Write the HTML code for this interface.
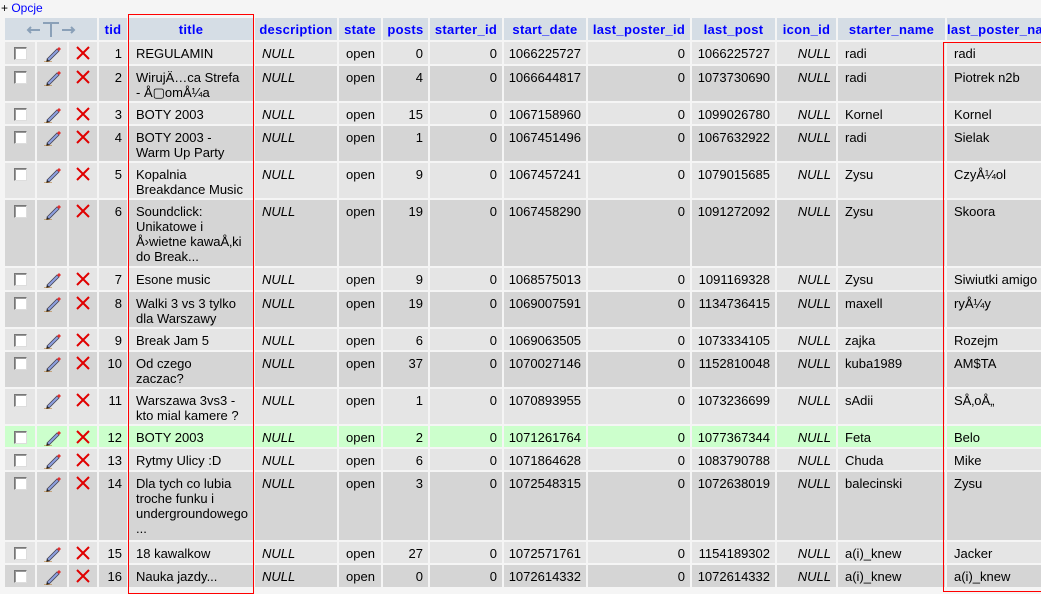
<!DOCTYPE html>
<html><head><meta charset="utf-8"><style>
body{margin:0;background:#f5f5f5;font-family:"Liberation Sans",sans-serif;font-size:13px;color:#000;width:1041px;height:587px;overflow:hidden;position:relative}
.op{position:absolute;left:1px;top:1px;font-size:12px;line-height:14px}
.op a{color:#0000ff;text-decoration:none}
.c{position:absolute;overflow:hidden;white-space:nowrap;line-height:15px;padding-top:4px;box-sizing:border-box}
.h{background:#d5dde5;color:#0000ff;font-weight:bold;text-align:center;letter-spacing:0.3px;padding-top:4px}
.l{padding-left:7px}.r{text-align:right;padding-right:5px}.m{text-align:center}
.cb{display:inline-block;width:11px;height:11px;border:1px solid #777;border-right-color:#ddd;border-bottom-color:#ddd;background:#fff;margin-top:1px;box-shadow:inset 1px 1px 0 #999}
.box{position:absolute;border:1px solid #ff0000;box-sizing:border-box}
i{font-style:italic}
</style></head><body>
<div class="op">+ <a>Opcje</a></div>
<div id="t"></div>
<div class="box" style="left:128px;top:14px;width:126px;height:580px"></div>
<div class="box" style="left:943px;top:42px;width:100px;height:550px"></div>
<script>
var X=[5,37,69,99,129,255,339,383,430,504,588,692,777,838,947],W=[30,30,28,28,124,82,42,45,72,82,102,83,59,107,114];
var Y=[42,66,103,126,163,200,268,292,329,352,389,426,449,472,542,565],H=[22,35,21,35,35,66,22,35,21,35,35,21,21,68,21,22];
var hd=['','','','tid','title','description','state','posts','starter_id','start_date','last_poster_id','last_post','icon_id','starter_name','last_poster_name'];
var rows=[
[1,"REGULAMIN",0,"1066225727","1066225727","radi","radi"],
[2,"WirujÄ…ca Strefa<br>- Å&#9634;omÅ¼a",4,"1066644817","1073730690","radi","Piotrek n2b"],
[3,"BOTY 2003",15,"1067158960","1099026780","Kornel","Kornel"],
[4,"BOTY 2003 -<br>Warm Up Party",1,"1067451496","1067632922","radi","Sielak"],
[5,"Kopalnia<br>Breakdance Music",9,"1067457241","1079015685","Zysu","CzyÅ¼ol"],
[6,"Soundclick:<br>Unikatowe i<br>Å›wietne kawaÅ‚ki<br>do Break...",19,"1067458290","1091272092","Zysu","Skoora"],
[7,"Esone music",9,"1068575013","1091169328","Zysu","Siwiutki amigo"],
[8,"Walki 3 vs 3 tylko<br>dla Warszawy",19,"1069007591","1134736415","maxell","ryÅ¼y"],
[9,"Break Jam 5",6,"1069063505","1073334105","zajka","Rozejm"],
[10,"Od czego<br>zaczac?",37,"1070027146","1152810048","kuba1989","AM$TA"],
[11,"Warszawa 3vs3 -<br>kto mial kamere ?",1,"1070893955","1073236699","sAdii","SÅ‚oÅ„"],
[12,"BOTY 2003",2,"1071261764","1077367344","Feta","Belo"],
[13,"Rytmy Ulicy :D",6,"1071864628","1083790788","Chuda","Mike"],
[14,"Dla tych co lubia<br>troche funku i<br>undergroundowego<br>...",3,"1072548315","1072638019","balecinski","Zysu"],
[15,"18 kawalkow",27,"1072571761","1154189302","a(i)_knew","Jacker"],
[16,"Nauka jazdy...",0,"1072614332","1072614332","a(i)_knew","a(i)_knew"]];
var pen='<svg width="18" height="16" viewBox="0 0 18 16"><path d="M4 13L14 3L16 5L6 15Z" fill="#8ea0e0" stroke="#445" stroke-width="0.8"/><path d="M14 3L16 1L18 3L16 5Z" fill="#e03030"/><path d="M4 13L3 16L6 15Z" fill="#222"/><path d="M1 16H9" stroke="#b07020" stroke-width="1"/></svg>';
var xx='<svg width="16" height="14" viewBox="0 0 16 14"><path d="M2 1L14 13M14 1L2 13" stroke="#e00000" stroke-width="2"/></svg>';
var s='';
function cell(i,y,h,cls,bg,txt){s+='<div class="c '+cls+'" style="left:'+X[i]+'px;top:'+y+'px;width:'+W[i]+'px;height:'+h+'px;background:'+bg+'">'+txt+'</div>';}
s+='<div class="c h" style="left:5px;top:18px;width:92px;height:22px;padding-top:2px"><svg width="50" height="18" viewBox="0 0 50 18"><g stroke="#8aa0b8" stroke-width="2" fill="none"><path d="M2 10H14M5 7L2 10L5 13"/><path d="M36 10H48M45 7L48 10L45 13"/><path d="M17 3H33M25 3V17"/></g></svg></div>';
for(var i=3;i<15;i++)s+='<div class="c h" style="left:'+X[i]+'px;top:18px;width:'+W[i]+'px;height:22px">'+hd[i]+'</div>';
rows.forEach(function(r,k){
 var bg=r[0]==12?'#ccffcc':(k%2?'#d5d5d5':'#e5e5e5'),y=Y[k],h=H[k];
 var v=[['m','<span class="cb"></span>'],['m',pen],['m',xx],['r',r[0]],['l',r[1]],['l','<i>NULL</i>'],['l','open'],['r',r[2]],['r','0'],['r',r[3]],['r','0'],['r',r[4]],['r','<i>NULL</i>'],['l',r[5]],['l',r[6]]];
 v.forEach(function(q,i){cell(i,y,h,q[0],bg,q[1]);});
});
document.getElementById('t').innerHTML=s;
</script>
</body></html>
